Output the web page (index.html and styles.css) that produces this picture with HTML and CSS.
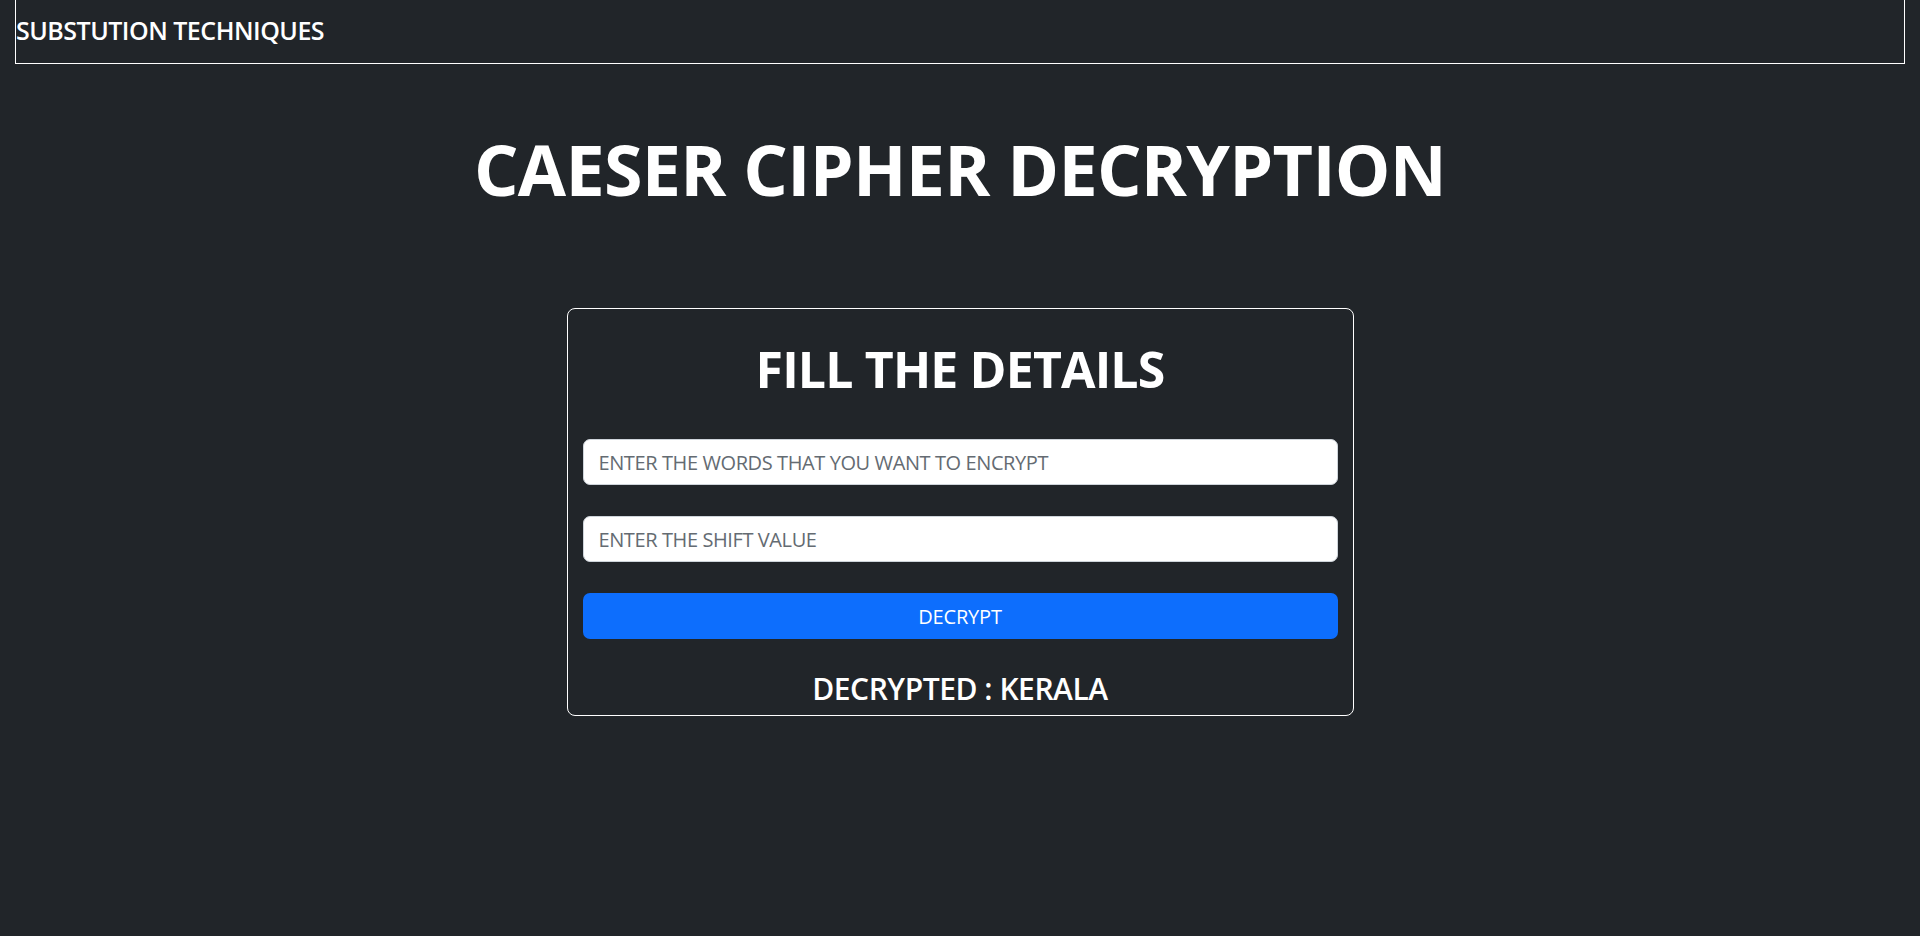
FILE: index.html
```html
<!DOCTYPE html>
<html lang="en">
<head>
<meta charset="utf-8">
<title>Caeser Cipher Decryption</title>
<link rel="stylesheet" href="styles.css">
</head>
<body>
<nav class="topbar">
  <span class="brand">SUBSTUTION TECHNIQUES</span>
</nav>
<main class="page">
  <h1 class="page-title">CAESER CIPHER DECRYPTION</h1>
  <section class="card">
    <h2 class="card-title">FILL THE DETAILS</h2>
    <form class="form">
      <input class="field" type="text" placeholder="ENTER THE WORDS THAT YOU WANT TO ENCRYPT">
      <input class="field" type="text" placeholder="ENTER THE SHIFT VALUE">
      <button class="btn" type="button">DECRYPT</button>
    </form>
    <h4 class="result">DECRYPTED : KERALA</h4>
  </section>
</main>
</body>
</html>
```
FILE: styles.css
```css
* { box-sizing: border-box; }
html, body { margin: 0; padding: 0; }
body {
  background: #212529;
  color: #fff;
  font-family: "Open Sans", "Noto Sans", "Liberation Sans", sans-serif;
  height: 936px;
  overflow: hidden;
}
.topbar {
  margin: 0 15px;
  height: 64px;
  border: 1px solid #fff;
  border-top: 0;
  padding-top: 12px;
}
.brand {
  display: block;
  font-size: 25px;
  font-weight: 600;
  line-height: 1.5;
  letter-spacing: -0.5px;
}
.page {
  display: flex;
  flex-direction: column;
  align-items: center;
}
.page-title {
  margin: 63px 0 0;
  font-size: 70px;
  font-weight: 700;
  line-height: 1.2;
  letter-spacing: -0.7px;
  text-align: center;
}
.card {
  margin-top: 97px;
  width: 787px;
  border: 1px solid #fff;
  border-radius: 8px;
  padding: 30px 15px 8px;
}
.card-title {
  margin: 0;
  font-size: 50px;
  font-weight: 700;
  line-height: 1.2;
  letter-spacing: -0.85px;
  text-align: center;
}
.form {
  margin-top: 40px;
  display: flex;
  flex-direction: column;
  gap: 31px;
}
.field {
  display: block;
  width: 100%;
  height: 46px;
  border: 1px solid #ced4da;
  border-radius: 7px;
  padding: 0 15px;
  font-family: inherit;
  font-size: 20px;
  letter-spacing: -0.4px;
  color: #212529;
  background: #fff;
}
.field::placeholder { color: #646b72; opacity: 1; }
.btn {
  height: 46px;
  width: 100%;
  border: 0;
  border-radius: 7px;
  background: #0d6efd;
  color: #fff;
  font-family: inherit;
  font-size: 20px;
  letter-spacing: -0.2px;
}
.result {
  margin: 32px 0 0;
  font-size: 30px;
  font-weight: 600;
  line-height: 1.2;
  letter-spacing: -0.45px;
  text-align: center;
}
```
